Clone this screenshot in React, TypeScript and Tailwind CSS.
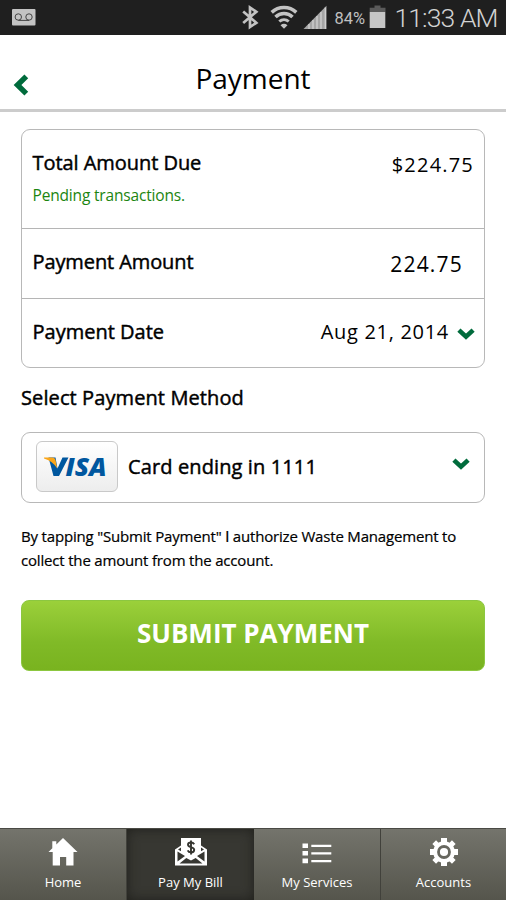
import React from "react";

function Chevron({ className }: { className: string }) {
  return (
    <svg className={className} width="18" height="12" viewBox="0 0 18 12" fill="none">
      <path d="M1.900 2.100 9 8.700 16.100 2.100" stroke="#006b3c" strokeWidth="4.600" />
    </svg>
  );
}

function StatusBar() {
  return (
    <div className="flex h-[35px] bg-[#1f1f1f] font-[Roboto,sans-serif] text-[#bdbdbd]">
      <svg width="506" height="35" viewBox="0 0 506 35" className="shrink-0">
        <rect x="12" y="9" width="23.500" height="16.500" rx="1" fill="#c3c3c3" />
        <g fill="none" stroke="#444" strokeWidth="1">
          <circle cx="18.300" cy="17" r="3.200" />
          <circle cx="29" cy="17" r="3.200" />
          <path d="M18.300 20.400H29" />
        </g>
        <path d="M243.200 11.400 256.300 22.800 250 27V7.500L256.300 11.800 243.200 23" fill="none" stroke="#c3c3c3" strokeWidth="2.700" />
        <g fill="none" stroke="#c3c3c3" strokeWidth="3.500">
          <path d="M271.700 12.400a18 18 0 0 1 24.600 0" />
          <path d="M275.500 17a12.200 12.200 0 0 1 17 0" />
          <path d="M279.300 21.500a7 7 0 0 1 9.400 0" strokeWidth="3" />
        </g>
        <path d="M280.500 25.200q3.500-2.800 7 0L284 28.800Z" fill="#c3c3c3" />
        <path d="M303.500 29 326.500 5.700V29Z" fill="#a5a5a5" />
        <g stroke="#d0d0d0" strokeWidth="1.300">
          <path d="M309 24v5M313 20v9M317 16v13M321 12v17M325.300 7.500v21.500" />
        </g>
        <path d="M374.500 5.500h6v2.300h5V12h-15.800V7.800h4.800Z" fill="#5b5b5b" />
        <rect x="369.700" y="12" width="15.600" height="16" fill="#c6c6c6" />
        <text x="334.500" y="24.200" fontSize="17" textLength="30.500" lengthAdjust="spacingAndGlyphs" fill="#c0c0c0">84%</text>
        <text x="394.500" y="26.500" fontSize="26.500" fontWeight="300" textLength="104" fill="#d2d2d2">11:33 AM</text>
      </svg>
    </div>
  );
}

function Header() {
  return (
    <header className="flex h-[77px] items-start border-b-[3px] border-[#cccccc]">
      <svg className="mt-[39px] ml-[13px]" width="18" height="22" viewBox="0 0 18 22" fill="none">
        <path d="M13.300 2.300 4.500 11 13.300 19.700" stroke="#006b3c" strokeWidth="5.400" />
      </svg>
      <h1 className="mt-[25px] flex-1 pr-[31px] text-center text-[28px] leading-[36px]">Payment</h1>
    </header>
  );
}

function HomeIcon() {
  return (
    <svg width="30" height="30" viewBox="0 0 30 30" fill="white">
      <path d="M15 1 29.500 15H25.500V28.500H18.200V20H12v8.500H4.700V15H.5L4.300 11.300V4.200H8.300V7.500Z" />
    </svg>
  );
}

function BillIcon() {
  return (
    <svg width="34" height="30" viewBox="0 0 34 30">
      <path d="M1 12.500 7 8.500H27L33 12.500V28.500H1Z" fill="white" />
      <path d="M3.500 14.500v10L11 19ZM30.500 14.500v10L23 19ZM5.500 26.500 12.300 21 17 23.500 21.700 21 28.500 26.500ZM4 12.500 7 10.500v3.800ZM30 12.500 27 10.500v3.800Z" fill="#373732" />
      <path d="M7 1H27V15.500L17 21.500 7 15.500Z" fill="white" />
      <path d="M20.200 7.300q-1-1.800-3.200-1.800-3 0-3 2.200c0 3.100 6.200 1.700 6.200 5 0 2-1.300 2.700-3.200 2.700q-2.500 0-3.300-2M17 3.400v14" fill="none" stroke="#34342f" strokeWidth="1.900" />
    </svg>
  );
}

function ServicesIcon() {
  return (
    <svg width="30" height="30" viewBox="0 0 30 30" fill="white">
      <path d="M.5 6.500h5.500v4.600h-5.500zM.5 14h5.500v4.600h-5.500zM.5 21.600h5.500v4.600h-5.500zM9.300 7.700h20v2.300h-20zM9.300 15.300h20v2.300h-20zM9.300 23h20v2.300h-20z" />
    </svg>
  );
}

function GearIcon() {
  return (
    <svg width="30" height="30" viewBox="0 0 30 30">
      <g stroke="white" strokeWidth="6">
        <path d="M15 1v28M1 15h28" />
        <path d="M5.200 5.200 24.800 24.800M24.800 5.200 5.200 24.800" strokeWidth="5.200" />
      </g>
      <circle cx="15" cy="15" r="10.800" fill="white" />
      <circle cx="15" cy="15" r="5.500" fill="white" stroke="#67675f" strokeWidth="2.800" />
    </svg>
  );
}

const tabs = [
  { label: "Home", icon: <HomeIcon /> },
  { label: "Pay My Bill", icon: <BillIcon />, active: true },
  { label: "My Services", icon: <ServicesIcon /> },
  { label: "Accounts", icon: <GearIcon /> },
];

function TabBar() {
  return (
    <nav className="grid h-[72px] grid-cols-[127px_127px_127px_125px] border-t border-[#4a4a44] text-white">
      {tabs.map((t) => (
        <div
          key={t.label}
          className={
            t.active
              ? "flex flex-col items-center bg-[#373732] pt-[8px] shadow-[inset_0_0_12px_#20201c]"
              : "flex flex-col items-center border-r border-[#41413b] bg-linear-to-b from-[#74746c] to-[#55554c] pt-[8px] last:border-r-0"
          }
        >
          {t.icon}
          <span className="mt-[5px] whitespace-nowrap text-[13px] leading-[20px]">{t.label}</span>
        </div>
      ))}
    </nav>
  );
}

export default function App() {
  return (
    <div className="flex h-[900px] w-[506px] flex-col overflow-hidden bg-white font-['Open_Sans','Noto_Sans',sans-serif] text-black">
      <StatusBar />
      <Header />
      <main className="flex-1 px-[21px] pt-[17px]">
        <section className="h-[239px] rounded-[9px] border-[1.500px] border-[#b8b8b8] text-[20px] leading-[28px]">
          <div className="flex h-[99px] justify-between border-b border-[#b5b5b5] pt-[19px] pr-[10px] pl-[10.500px]">
            <div>
              <div className="tracking-[-0.050px] [-webkit-text-stroke:0.450px_black]">Total Amount Due</div>
              <div className="mt-[7px] text-[15.500px] leading-[22px] tracking-[-0.170px] text-[#1b850f]">Pending transactions.</div>
            </div>
            <div className="pt-[2px] tracking-[1.200px]">$224.75</div>
          </div>
          <div className="flex h-[70px] justify-between border-b border-[#b5b5b5] pt-[19px] pr-[21px] pl-[10.500px]">
            <div className="tracking-[-0.100px] [-webkit-text-stroke:0.450px_black]">Payment Amount</div>
            <div className="pt-[2px] text-[21px] tracking-[1.200px]">224.75</div>
          </div>
          <div className="flex pt-[19px] pr-[9px] pl-[10.500px]">
            <div className="[-webkit-text-stroke:0.450px_black]">Payment Date</div>
            <div className="ml-auto tracking-[0.700px]">Aug 21, 2014</div>
            <Chevron className="mt-[10px] ml-[8px]" />
          </div>
        </section>
        <h2 className="mt-[16px] text-[20px] leading-[28px] tracking-[0.100px] [-webkit-text-stroke:0.450px_black]">Select Payment Method</h2>
        <section className="mt-[20px] flex h-[71px] items-center rounded-[9px] border-[1.500px] border-[#b8b8b8] pr-[14px] pl-[14px]">
          <div className="mt-[-2px] flex h-[51px] w-[82px] rounded-[6px] border border-[#c9c9c9] bg-linear-to-b from-white to-[#ededed]">
            <svg width="80" height="49" viewBox="0 0 80 49">
              <path d="M11.500 15.500H18.500L20.500 26.500 25.500 15.500H31.500L22 34H16.500Z" fill="#00579f" />
              <path d="M7 15.500h8.500q2.500 0 3 2.500l1.800 8.500Q15 18.500 7 16.500Z" fill="#faa61a" />
              <text x="28.500" y="34" fontFamily="Open Sans" fontSize="25.500" fontStyle="italic" fontWeight="800" fill="#00579f" textLength="41" lengthAdjust="spacingAndGlyphs">ISA</text>
            </svg>
          </div>
          <div className="mt-[-2px] ml-[10px] text-[20px] leading-[28px] tracking-[0.120px] [-webkit-text-stroke:0.450px_black]">Card ending in 1111</div>
          <Chevron className="mt-[-7px] ml-auto" />
        </section>
        <p className="mt-[21px] whitespace-nowrap text-[15px] leading-[24px] tracking-[-0.180px] [-webkit-text-stroke:0.200px_black]">
          By tapping "Submit Payment" <span className="font-[Roboto,sans-serif] leading-none">I</span> authorize Waste Management to
          <br />
          collect the amount from the account.
        </p>
        <button className="mt-[28px] flex h-[71px] w-full items-start justify-center rounded-[8px] border border-[#8cc740] bg-linear-to-b from-[#9bd03a] via-[#80ba27] via-60% to-[#79b31f] pt-[14px] text-[26px] leading-[36px] font-bold text-white">
          SUBMIT PAYMENT
        </button>
      </main>
      <TabBar />
    </div>
  );
}
